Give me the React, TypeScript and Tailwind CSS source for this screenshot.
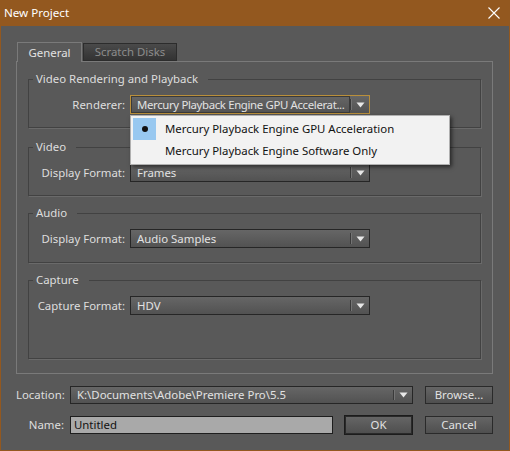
import type { ReactNode } from "react";

function Arrow() {
  return (
    <svg width="9" height="6" viewBox="0 0 9 6" className="block">
      <path d="M0.5 0.5 H8.5 L4.5 5.5 Z" fill="#e8e8e8" />
    </svg>
  );
}

interface SelectProps {
  value: string;
  className: string;
  focused?: boolean;
  children?: ReactNode;
}

function Select({ value, className, focused, children }: SelectProps) {
  return (
    <div className={`relative ${className}`}>
      <div
        className={`flex h-full items-stretch border ${
          focused ? "border-[#b98f3b]" : "border-[#262626]"
        } bg-gradient-to-b from-[#666666] to-[#525252]`}
      >
        <div
          className={`flex flex-1 items-center overflow-hidden whitespace-nowrap text-[#e2e2e2] ${
            focused
              ? "pl-[6px] tracking-[-0.35px] shadow-[inset_0_0_0_1px_#3a3a3a]"
              : "pl-[6px]"
          }`}
        >
          {value}
        </div>
        <div className="my-[3px] w-[1px] bg-[#3a3a3a] shadow-[1px_0_0_#747474]" />
        <div className="flex w-[18px] items-center justify-center">
          <Arrow />
        </div>
      </div>
      {children}
    </div>
  );
}

interface GroupProps {
  title: string;
  label: string;
  value: string;
  height: string;
  focused?: boolean;
  children?: ReactNode;
}

function Group({ title, label, value, height, focused, children }: GroupProps) {
  return (
    <fieldset
      className={`w-[453px] ${height} border border-[#424242] shadow-[1px_1px_0_#6a6a6a]`}
    >
      <legend className="ml-[4px] pl-[3px] pr-[10px] leading-[16px] text-[#dedede]">
        {title}
      </legend>
      <div className="mt-[8px] flex items-center">
        <div className="w-[96px] text-right text-[#dedede]">{label}</div>
        <Select
          value={value}
          focused={focused}
          className="ml-[5px] h-[19px] w-[240px]"
        >
          {children}
        </Select>
      </div>
    </fieldset>
  );
}

function RendererMenu() {
  return (
    <div className="absolute left-0 top-[20px] z-20 w-[320px] border border-[#b0b0b0] bg-[#f2f2f2] p-[2px] shadow-[2px_2px_4px_rgba(0,0,0,0.55)]">
      <div className="flex h-[22px] items-center">
        <div className="flex h-[22px] w-[23px] items-center justify-center bg-[#98c8f0]">
          <div className="h-[6px] w-[6px] rounded-full bg-[#111111]" />
        </div>
        <span className="ml-[9px] text-[#111111]">
          Mercury Playback Engine GPU Acceleration
        </span>
      </div>
      <div className="flex h-[22px] items-center">
        <div className="w-[23px]" />
        <span className="ml-[9px] text-[#111111]">
          Mercury Playback Engine Software Only
        </span>
      </div>
    </div>
  );
}

function Button({ label, className }: { label: string; className: string }) {
  return (
    <div
      className={`flex items-center justify-center border border-[#2a2a2a] bg-gradient-to-b from-[#656565] to-[#4f4f4f] text-[#e2e2e2] ${className}`}
    >
      {label}
    </div>
  );
}

export default function App() {
  return (
    <div className="flex h-[451px] w-[510px] flex-col border-x border-b border-[#93581f] font-['Noto_Sans',sans-serif] text-[11.4px] leading-none">
      <div className="flex h-[26px] shrink-0 items-center justify-between bg-[#93581f] pl-[3px] pr-[9px] text-[11.6px] text-white">
        <span>New Project</span>
        <svg width="12" height="12" viewBox="0 0 12 12">
          <path d="M0.5 0.5 L11.5 11.5 M11.5 0.5 L0.5 11.5" stroke="#ffffff" strokeWidth="1.1" />
        </svg>
      </div>

      <div className="flex-1 bg-[#595959] pl-[15px] pt-[16px]">
        <div className="flex h-[19px] items-end">
          <div className="relative z-10 -mb-[1px] ml-[1px] flex h-[20px] w-[65px] items-center justify-center border-x border-t border-[#7a7a7a] bg-[#595959] text-[#e2e2e2]">
            General
          </div>
          <div className="ml-[1px] flex h-[18px] w-[94px] items-center justify-center border border-[#2c2c2c] bg-gradient-to-b from-[#4a4a4a] to-[#333333] text-[#8c8c8c]">
            Scratch Disks
          </div>
        </div>

        <div className="flex h-[313px] w-[477px] flex-col border border-[#7a7a7a] px-[11px] pt-[9px]">
          <Group
            title="Video Rendering and Playback"
            label="Renderer:"
            value="Mercury Playback Engine GPU Accelerat..."
            height="h-[57px]"
            focused
          >
            <RendererMenu />
          </Group>
          <div className="mt-[11px]">
            <Group title="Video" label="Display Format:" value="Frames" height="h-[57px]" />
          </div>
          <div className="mt-[9px]">
            <Group title="Audio" label="Display Format:" value="Audio Samples" height="h-[58px]" />
          </div>
          <div className="mt-[9px]">
            <Group title="Capture" label="Capture Format:" value="HDV" height="h-[87px]" />
          </div>
        </div>

        <div className="mt-[12px] flex items-center">
          <div className="w-[48px] text-right text-[#dedede]">Location:</div>
          <Select
            value="K:\Documents\Adobe\Premiere Pro\5.5"
            className="ml-[6px] h-[18px] w-[343px]"
          />
          <Button label="Browse..." className="ml-[12px] h-[18px] w-[68px]" />
        </div>

        <div className="mt-[11px] flex items-center">
          <div className="w-[48px] text-right text-[#dedede]">Name:</div>
          <div className="ml-[6px] flex h-[18px] w-[263px] items-center border border-[#1e1e1e] bg-[#a9a9a9] pl-[3px] text-[#111111]">
            Untitled
          </div>
          <div className="ml-[11px] h-[20px] w-[69px] border border-[#1c1c1c]">
            <Button label="OK" className="h-full w-full" />
          </div>
          <Button label="Cancel" className="ml-[12px] h-[18px] w-[68px]" />
        </div>
      </div>
    </div>
  );
}
